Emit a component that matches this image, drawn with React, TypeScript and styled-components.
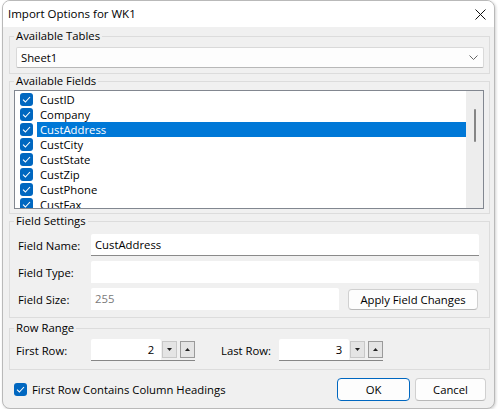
import React from "react";
import styled, { createGlobalStyle } from "styled-components";

const GlobalStyle = createGlobalStyle`
  html, body {
    margin: 0;
    padding: 0;
    background: #ffffff;
  }
  body {
    font-family: "Open Sans", "Liberation Sans", Arial, sans-serif;
    font-size: 11.3px;
    color: #000;
  }
`;

const fields = ["CustID", "Company", "CustAddress", "CustCity", "CustState", "CustZip", "CustPhone", "CustFax"];

const Window = styled.div`
  margin-left: 2px;
  width: 493px;
  height: 409px;
  box-sizing: border-box;
  border: 1px solid #b9b9b9;
  border-radius: 8px;
  background: #f0f0f0;
  overflow: hidden;
  display: flex;
  flex-direction: column;
  box-shadow: 1px 1px 3px rgba(0, 0, 0, 0.18);
`;

const TitleBar = styled.div`
  height: 26px;
  flex: none;
  background: #ffffff;
  display: flex;
  align-items: center;
  justify-content: space-between;
  padding: 0 8px 1px 5px;
  box-sizing: border-box;
  font-size: 11.5px;
`;

const CloseButton = styled.div`
  width: 12px;
  height: 12px;
  display: flex;
  align-items: center;
  justify-content: center;
  margin-top: 1px;
`;

const Body = styled.div`
  flex: 1;
  display: flex;
  flex-direction: column;
  padding: 2px 4px 5px 6px;
`;

// padding of the group box; the legend is pulled back so its text always starts 6px in
const Group = styled.fieldset<{ $pad: [number, number, number, number]; $gap?: number }>`
  margin: ${({ $gap }) => $gap ?? 0}px 0 0 0;
  min-width: 0;
  border: 1px solid #dcdcdc;
  padding: ${({ $pad }) => $pad.map((v) => `${v}px`).join(" ")};
`;

const Legend = styled.legend<{ $offset: number }>`
  margin-left: ${({ $offset }) => 4 - $offset}px;
  padding: 0 2px;
  line-height: 14px;
`;

const Combo = styled.div`
  height: 21px;
  box-sizing: border-box;
  background: #fdfdfd;
  border: 1px solid #d9d9d9;
  border-bottom-color: #b8b8b8;
  border-radius: 2px;
  display: flex;
  align-items: center;
  justify-content: space-between;
  padding: 0 5px 0 4px;
`;

const ListBox = styled.div`
  height: 119px;
  box-sizing: border-box;
  border: 1px solid #828790;
  background: #fff;
  display: flex;
  overflow: hidden;
`;

const ListItems = styled.div`
  flex: 1;
  padding: 1px 0 0 5px;
`;

const ListRow = styled.div`
  height: 15px;
  display: flex;
  align-items: center;
`;

const RowText = styled.span<{ $selected?: boolean }>`
  flex: 1;
  height: 15px;
  line-height: 15px;
  margin-left: 4px;
  padding-left: 3px;
  background: ${({ $selected }) => ($selected ? "#0078d7" : "transparent")};
  color: ${({ $selected }) => ($selected ? "#fff" : "#000")};
`;

const ScrollBar = styled.div`
  width: 17px;
  flex: none;
  background: #ededed;
  display: flex;
  justify-content: center;
  padding-top: 18px;
  box-sizing: border-box;
`;

const Thumb = styled.div`
  width: 2px;
  height: 33px;
  border-radius: 1px;
  background: #858585;
`;

const Box = styled.span`
  width: 13px;
  height: 13px;
  flex: none;
  border-radius: 3px;
  background: #0067c0;
  display: inline-flex;
  align-items: center;
  justify-content: center;
`;

const FormRow = styled.div<{ $labelWidth: number }>`
  display: grid;
  grid-template-columns: ${({ $labelWidth }) => $labelWidth}px 1fr;
  align-items: center;
  height: 22px;
  & + & {
    margin-top: 5px;
  }
`;

const Label = styled.span<{ $width?: number; $indent?: number }>`
  white-space: nowrap;
  flex: none;
  width: ${({ $width }) => ($width ? `${$width}px` : "auto")};
  margin-left: ${({ $indent }) => $indent ?? 0}px;
`;

const Input = styled.div<{ $focused?: boolean; $muted?: boolean; $width?: number }>`
  height: 22px;
  width: ${({ $width }) => ($width ? `${$width}px` : "auto")};
  box-sizing: border-box;
  background: #fff;
  border-bottom: 1px solid ${({ $focused }) => ($focused ? "#8a8a8a" : "#fff")};
  border-radius: 2px 2px 0 0;
  padding: 0 4px;
  display: flex;
  align-items: center;
  color: ${({ $muted }) => ($muted ? "#7a7a7a" : "#000")};
`;

const SizeRow = styled.div`
  display: flex;
  align-items: center;
  gap: 9px;
`;

const Button = styled.button<{ $primary?: boolean; $width: number; $height: number }>`
  width: ${({ $width }) => $width}px;
  height: ${({ $height }) => $height}px;
  box-sizing: border-box;
  border-radius: 4px;
  border: 1px solid ${({ $primary }) => ($primary ? "#0067c0" : "#d0d0d0")};
  border-bottom-color: ${({ $primary }) => ($primary ? "#0067c0" : "#b8b8b8")};
  background: #fdfdfd;
  font: inherit;
  color: #000;
  padding: 0;
  flex: none;
`;

const RangeRow = styled.div`
  display: flex;
  align-items: center;
  height: 22px;
`;

const Spin = styled.div`
  display: flex;
  align-items: center;
  height: 22px;
  width: 104px;
  box-sizing: border-box;
  border-bottom: 1px solid #868686;
`;

const SpinValue = styled.div`
  width: 71px;
  height: 21px;
  background: #fff;
  border-radius: 2px 2px 0 0;
  display: flex;
  align-items: center;
  justify-content: flex-end;
  padding-right: 7px;
  box-sizing: border-box;
`;

const SpinButton = styled.div<{ $dark?: boolean }>`
  width: 15px;
  height: 17px;
  box-sizing: border-box;
  margin-left: ${({ $dark }) => ($dark ? 3 : 1)}px;
  border: 1px solid ${({ $dark }) => ($dark ? "#9a9a9a" : "#c8c8c8")};
  background: #e4e4e4;
  display: flex;
  align-items: center;
  justify-content: center;
`;

const Footer = styled.div`
  display: flex;
  align-items: center;
  margin-top: 8px;
  padding: 0 4px 0 5px;
  height: 23px;
`;

const CheckLabel = styled.label`
  display: flex;
  align-items: center;
  gap: 5px;
  flex: 1;
`;

const Buttons = styled.div`
  display: flex;
  gap: 5px;
`;

const Check = () => (
  <Box>
    <svg width="9" height="7" viewBox="0 0 9 7">
      <path d="M1 3.6 L3.4 6 L8 1" fill="none" stroke="#fff" strokeWidth="1.1" />
    </svg>
  </Box>
);

const Tri = ({ up }: { up?: boolean }) => (
  <svg width="5" height="3" viewBox="0 0 5 3">
    <path d={up ? "M0 3 L2.5 0 L5 3 Z" : "M0 0 L5 0 L2.5 3 Z"} fill="#222" />
  </svg>
);

const SpinBox = ({ value }: { value: number }) => (
  <Spin>
    <SpinValue>{value}</SpinValue>
    <SpinButton>
      <Tri />
    </SpinButton>
    <SpinButton $dark>
      <Tri up />
    </SpinButton>
  </Spin>
);

export default function App() {
  return (
    <>
      <GlobalStyle />
      <Window>
        <TitleBar>
          <span>Import Options for WK1</span>
          <CloseButton>
            <svg width="11" height="11" viewBox="0 0 11 11">
              <path d="M0.5 0.5 L10.5 10.5 M10.5 0.5 L0.5 10.5" stroke="#111" strokeWidth="1" />
            </svg>
          </CloseButton>
        </TitleBar>
        <Body>
          <Group $pad={[4, 5, 5, 6]}>
            <Legend $offset={6}>Available Tables</Legend>
            <Combo>
              <span>Sheet1</span>
              <svg width="9" height="5" viewBox="0 0 9 5">
                <path d="M0.5 0.5 L4.5 4.5 L8.5 0.5" fill="none" stroke="#555" strokeWidth="0.9" />
              </svg>
            </Combo>
          </Group>
          <Group $pad={[2, 5, 4, 4]}>
            <Legend $offset={4}>Available Fields</Legend>
            <ListBox>
              <ListItems>
                {fields.map((f) => (
                  <ListRow key={f}>
                    <Check />
                    <RowText $selected={f === "CustAddress"}>{f}</RowText>
                  </ListRow>
                ))}
              </ListItems>
              <ScrollBar>
                <Thumb />
              </ScrollBar>
            </ListBox>
          </Group>
          <Group $pad={[6, 10, 7, 8]}>
            <Legend $offset={8}>Field Settings</Legend>
            <FormRow $labelWidth={73}>
              <Label>Field Name:</Label>
              <Input $focused>CustAddress</Input>
            </FormRow>
            <FormRow $labelWidth={73}>
              <Label>Field Type:</Label>
              <Input />
            </FormRow>
            <FormRow $labelWidth={73}>
              <Label>Field Size:</Label>
              <SizeRow>
                <Input $muted $width={248}>255</Input>
                <Button $width={130} $height={21}>Apply Field Changes</Button>
              </SizeRow>
            </FormRow>
          </Group>
          <Group $pad={[4, 6, 8, 6]} $gap={3}>
            <Legend $offset={6}>Row Range</Legend>
            <RangeRow>
              <Label $width={75}>First Row:</Label>
              <SpinBox value={2} />
              <Label $width={58} $indent={26}>Last Row:</Label>
              <SpinBox value={3} />
            </RangeRow>
          </Group>
          <Footer>
            <CheckLabel>
              <Check />
              <span>First Row Contains Column Headings</span>
            </CheckLabel>
            <Buttons>
              <Button $primary $width={73} $height={23}>OK</Button>
              <Button $width={71} $height={23}>Cancel</Button>
            </Buttons>
          </Footer>
        </Body>
      </Window>
    </>
  );
}
